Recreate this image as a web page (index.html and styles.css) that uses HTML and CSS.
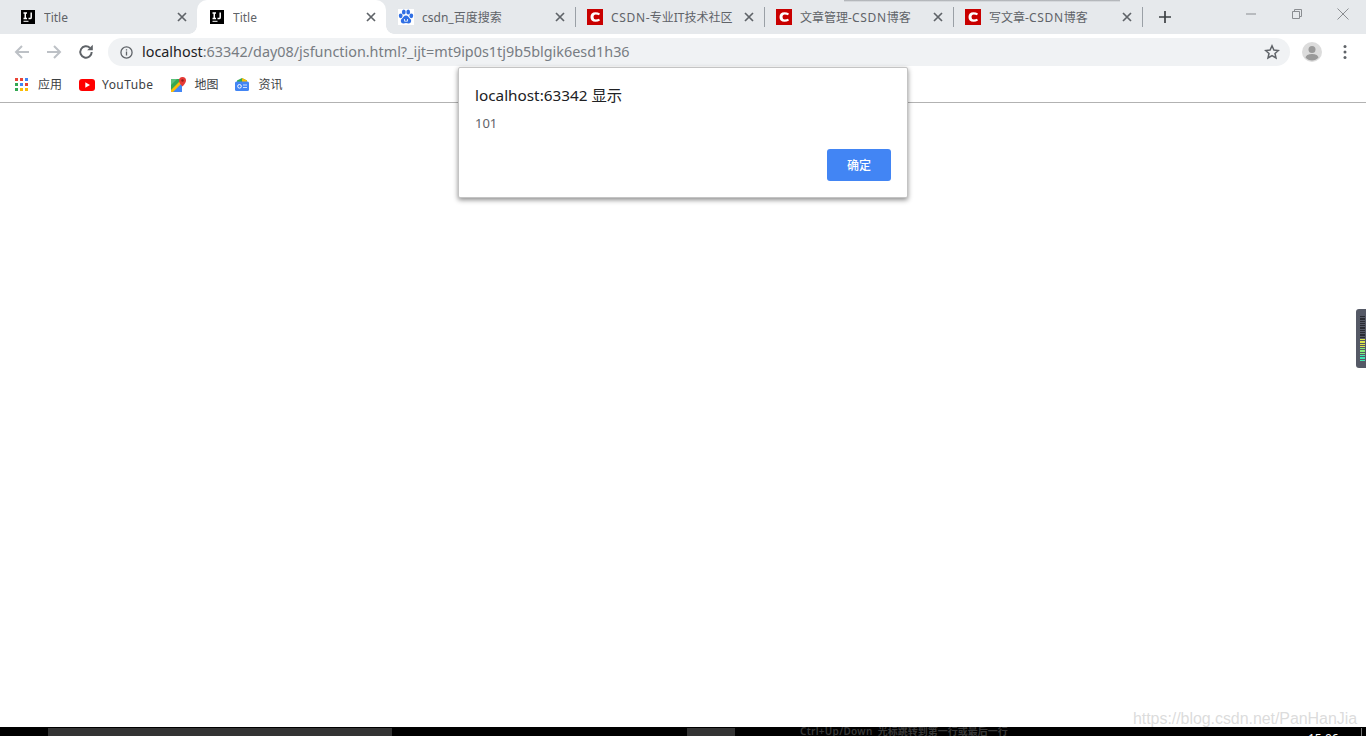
FILE: index.html
```html
<!DOCTYPE html>
<html lang="zh-CN">
<head>
<meta charset="utf-8">
<title>Title</title>
<link rel="stylesheet" href="styles.css">
</head>
<body>
<div class="browser">
  <div class="tabstrip">
    <div class="tab">
      <svg class="fav" viewBox="0 0 14 14"><rect width="14" height="14" fill="#000"/><path class="ij" d="M2.500 3h3.500M4.250 3v5.500M2.500 8.500h3.500M10.200 2.500v4.900q0 1.100-1.100 1.100H7.500"/><rect x="2.500" y="10.800" width="5" height="1" fill="#fff"/></svg>
      <span class="tab-title">Title</span>
      <svg class="close" viewBox="0 0 10 10"><path d="M1 1l8 8M9 1l-8 8"/></svg>
    </div>
    <div class="tab active">
      <svg class="fav" viewBox="0 0 14 14"><rect width="14" height="14" fill="#000"/><path class="ij" d="M2.500 3h3.500M4.250 3v5.500M2.500 8.500h3.500M10.200 2.500v4.900q0 1.100-1.100 1.100H7.500"/><rect x="2.500" y="10.800" width="5" height="1" fill="#fff"/></svg>
      <span class="tab-title">Title</span>
      <svg class="close" viewBox="0 0 10 10"><path d="M1 1l8 8M9 1l-8 8"/></svg>
    </div>
    <div class="tab after-active sep">
      <svg class="fav" viewBox="0 0 16 16"><rect width="16" height="16" fill="#fff"/><g fill="#2f6fe4"><ellipse cx="2.700" cy="6.800" rx="1.900" ry="2.400"/><ellipse cx="5.800" cy="2.900" rx="1.900" ry="2.500"/><ellipse cx="10.200" cy="2.900" rx="1.900" ry="2.500"/><ellipse cx="13.300" cy="6.800" rx="1.900" ry="2.400"/><path d="M8 6.500c-2.200 0-2.800 2.200-4.400 3.500-1.500 1.400-.7 4.500 1.700 4.500 1.100 0 1.900-.4 2.700-.4s1.600.4 2.700.4c2.400 0 3.200-3.100 1.700-4.500C10.800 8.700 10.200 6.500 8 6.500z"/></g><path d="M6.500 10v2.200h3V10" fill="none" stroke="#fff" stroke-width=".8"/></svg>
      <span class="tab-title">csdn_百度搜索</span>
      <svg class="close" viewBox="0 0 10 10"><path d="M1 1l8 8M9 1l-8 8"/></svg>
    </div>
    <div class="tab sep">
      <svg class="fav" viewBox="0 0 16 16"><rect width="16" height="16" fill="#c90000"/><path d="M13 4.500Q11 3.200 8.500 3.200 3.500 3.200 3.500 8t5 4.800q2.500 0 4.500-1.300l-1-1.700q-1.500.8-3.200.8-2.300 0-2.300-2.600t2.300-2.600q1.700 0 3.200.8z" fill="#fff"/></svg>
      <span class="tab-title"><span class="wide">CSDN</span>-专业IT技术社区</span>
      <svg class="close" viewBox="0 0 10 10"><path d="M1 1l8 8M9 1l-8 8"/></svg>
    </div>
    <div class="tab sep">
      <svg class="fav" viewBox="0 0 16 16"><rect width="16" height="16" fill="#c90000"/><path d="M13 4.500Q11 3.200 8.500 3.200 3.500 3.200 3.500 8t5 4.800q2.500 0 4.500-1.300l-1-1.700q-1.500.8-3.200.8-2.300 0-2.300-2.600t2.300-2.600q1.700 0 3.200.8z" fill="#fff"/></svg>
      <span class="tab-title">文章管理-<span class="wide">CSDN</span>博客</span>
      <svg class="close" viewBox="0 0 10 10"><path d="M1 1l8 8M9 1l-8 8"/></svg>
    </div>
    <div class="tab sep">
      <svg class="fav" viewBox="0 0 16 16"><rect width="16" height="16" fill="#c90000"/><path d="M13 4.500Q11 3.200 8.500 3.200 3.500 3.200 3.500 8t5 4.800q2.500 0 4.500-1.300l-1-1.700q-1.500.8-3.200.8-2.300 0-2.300-2.600t2.300-2.600q1.700 0 3.200.8z" fill="#fff"/></svg>
      <span class="tab-title">写文章-<span class="wide">CSDN</span>博客</span>
      <svg class="close" viewBox="0 0 10 10"><path d="M1 1l8 8M9 1l-8 8"/></svg>
    </div>
    <svg class="newtab" viewBox="0 0 12 12"><path d="M6 0v12M0 6h12"/></svg>
    <div class="winctl">
      <svg viewBox="0 0 12 12"><path d="M1 6h10"/></svg>
      <svg viewBox="0 0 12 12"><path d="M1.500 3.500h7v7h-7zM3.500 3.500v-2h7v7h-2"/></svg>
      <svg viewBox="0 0 12 12"><path d="M.5.500l11 11M11.500.500l-11 11"/></svg>
    </div>
  </div>

  <div class="toolbar">
    <svg class="navbtn" viewBox="0 0 16 16"><path class="off" d="M15 8H2M8 2L2 8l6 6"/></svg>
    <svg class="navbtn" viewBox="0 0 16 16"><path class="off" d="M1 8h13M8 2l6 6-6 6"/></svg>
    <svg class="navbtn" viewBox="0 0 16 16"><path class="on" d="M13.700 8A5.700 5.700 0 1 1 12 3.900"/><path d="M9.200 6.300h5.600V.700z" fill="#5f6368"/></svg>
    <div class="omnibox">
      <svg class="info" viewBox="0 0 14 14"><circle cx="7" cy="7" r="6" fill="none" stroke="#5f6368" stroke-width="1.400"/><path d="M6.300 6h1.400v4.300H6.300zM6.300 3.500h1.400v1.400H6.300z" fill="#5f6368"/></svg>
      <span class="url"><span class="host">localhost</span>:63342/day08/jsfunction.html?_ijt=mt9ip0s1tj9b5blgik6esd1h36</span>
      <svg class="star" viewBox="0 0 16 16"><path d="M8 1.800l1.900 4.200 4.500.5-3.400 3 1 4.500L8 11.700 4 14l1-4.500-3.400-3 4.500-.5z"/></svg>
    </div>
    <svg class="avatar" viewBox="0 0 20 20"><circle cx="10" cy="10" r="10" fill="#dcdcdc"/><circle cx="10" cy="7.500" r="3.500" fill="#9a9a9a"/><path d="M3.500 15.500c1-3 4-3.500 6.500-3.500s5.500.5 6.500 3.500c-1.500 2-4 3-6.500 3s-5-1-6.500-3z" fill="#9a9a9a"/></svg>
    <svg class="menu" viewBox="0 0 4 16"><circle cx="2" cy="2.500" r="1.500"/><circle cx="2" cy="8" r="1.500"/><circle cx="2" cy="13.500" r="1.500"/></svg>
  </div>

  <div class="bookmarks">
    <div class="bm bm-apps">
      <svg viewBox="0 0 13 13"><g>
        <rect x="0" y="0" width="3" height="3" fill="#ea4335"/><rect x="5" y="0" width="3" height="3" fill="#ea4335"/><rect x="10" y="0" width="3" height="3" fill="#4285f4"/>
        <rect x="0" y="5" width="3" height="3" fill="#34a853"/><rect x="5" y="5" width="3" height="3" fill="#4285f4"/><rect x="10" y="5" width="3" height="3" fill="#ea4335"/>
        <rect x="0" y="10" width="3" height="3" fill="#34a853"/><rect x="5" y="10" width="3" height="3" fill="#fbbc05"/><rect x="10" y="10" width="3" height="3" fill="#fbbc05"/>
      </g></svg>
      <span>应用</span>
    </div>
    <div class="bm bm-yt">
      <svg viewBox="0 0 16 12"><rect width="16" height="12" rx="3" fill="#f00"/><path d="M6.300 3.300v5.400L11 6z" fill="#fff"/></svg>
      <span class="yt-label">YouTube</span>
    </div>
    <div class="bm bm-map">
      <svg viewBox="0 0 16 16"><path d="M0 2h11v13H0z" fill="#34a853"/><path d="M0 15L11 4v11z" fill="#4285f4"/><path d="M0 13l9-9 2 2L2 15H0z" fill="#fbbc05"/><path d="M0 2h6L0 8z" fill="#5cc17c"/><path d="M11.500 0a3.500 3.500 0 0 0-3.500 3.500C8 6 11.500 9.500 11.500 9.500S15 6 15 3.500A3.500 3.500 0 0 0 11.500 0z" fill="#e53935"/><circle cx="11.500" cy="3.500" r="1.200" fill="#8e1f1b"/></svg>
      <span>地图</span>
    </div>
    <div class="bm bm-news">
      <svg viewBox="0 0 14 13"><path d="M2 2.500L7 0l5 2.500V5H2z" fill="#34a853"/><path d="M7 0l5 2.500V5H7z" fill="#fbbc05"/><rect x="0" y="3.500" width="14" height="9.500" rx="1.500" fill="#4285f4"/><circle cx="4.500" cy="8.300" r="1.800" fill="none" stroke="#fff" stroke-width="1"/><path d="M8 7h4M8 9.500h4" stroke="#cfe0fc" stroke-width="1"/></svg>
      <span>资讯</span>
    </div>
  </div>

  <main class="page"></main>

  <div class="taskbar">
    <div class="task-clip task-a"></div>
    <div class="task-clip task-b"></div>
    <span class="task-hint"><span class="hint-key">Ctrl+Up/Down</span>&nbsp; 光标跳转到第一行或最后一行</span>
    <span class="task-time">15:06</span>
    <div class="task-line"></div>
  </div>
</div>

<div class="edge-shadow"></div>

<div class="dialog">
  <div class="dialog-title">localhost:63342 显示</div>
  <div class="dialog-msg">101</div>
  <div class="dialog-actions"><button class="dialog-ok">确定</button></div>
</div>

<div class="meter">
  <i></i><i></i><i></i><i></i><i></i><i></i><i></i><i></i><i></i><i></i>
  <i class="y"></i><i class="y"></i><i class="y"></i><i class="y"></i><i class="g"></i><i class="g"></i><i class="g"></i><i class="c"></i><i class="c"></i><i class="c"></i>
</div>

<div class="watermark">https://blog.csdn.net/PanHanJia</div>
</body>
</html>
```
FILE: styles.css
```css
* { box-sizing: border-box; }
html, body { margin: 0; height: 100%; overflow: hidden; background: #fff; }
body { font-family: "Noto Sans", "Noto Sans CJK SC", sans-serif; color: #3c4043; }

.browser { display: flex; flex-direction: column; height: 736px; }

/* tab strip */
.tabstrip { display: flex; align-items: stretch; height: 34px; padding-left: 8px; background: #e6e9ec; flex: none; }
.tab { position: relative; width: 189px; display: flex; align-items: center; padding: 0 10px 0 13px; flex: none; }
.tab:first-child { border-bottom-right-radius: 8px; }
.tab.active { background: #fff; border-radius: 10px 10px 0 0; }
.tab.active::before, .tab.active::after { content: ""; position: absolute; bottom: 0; width: 8px; height: 8px; }
.tab.active::before { left: -8px; background: radial-gradient(circle at 0 0, #e6e9ec 7.500px, #fff 8px); }
.tab.active::after { right: -8px; background: radial-gradient(circle at 100% 0, #e6e9ec 7.500px, #fff 8px); }
.tab.sep::after { content: ""; position: absolute; right: -1px; top: 7px; height: 20px; width: 1px; background: #9aa0a6; }
.fav { width: 14px; height: 14px; flex: none; }
.ij { fill: none; stroke: #fff; stroke-width: 1.500; }
.after-active, .sep { padding-left: 12px; }
.sep .fav { width: 16px; height: 16px; }
.tab-title { margin-left: 9px; padding-top: 2px; flex: 1; font-size: 12px; white-space: nowrap; overflow: hidden; color: #5f6368; line-height: 16px; }
.sep .tab-title { margin-left: 8px; }
.wide { letter-spacing: .7px; }
.close { width: 10px; height: 10px; flex: none; fill: none; stroke: #5f6368; stroke-width: 1.700; }
.newtab { width: 12px; height: 12px; margin: 11px 0 0 17px; flex: none; fill: none; stroke: #3c4043; stroke-width: 1.700; }
.winctl { margin-left: auto; display: flex; gap: 34px; padding: 8px 17px 0 0; height: 20px; }
.winctl svg { width: 12px; height: 12px; fill: none; stroke: #8a8d91; stroke-width: 1; }

/* sliver of a window behind the browser, above the tabs */
.edge-shadow { position: absolute; left: 844px; top: 0; width: 276px; height: 2px; background: linear-gradient(#a4a7ab, #e6e9ec); }

/* toolbar */
.toolbar { display: flex; align-items: center; height: 34px; padding: 2px 19px 0 14px; background: #fff; flex: none; }
.navbtn { width: 16px; height: 16px; margin-right: 16px; flex: none; fill: none; stroke-width: 2; }
.off { stroke: #bdc1c6; }
.on { stroke: #5f6368; }
.omnibox { height: 28px; flex: 1; min-width: 0; margin-left: -2px; display: flex; align-items: center; background: #f0f2f4; border-radius: 14px; padding: 0 10px 0 12px; }
.info { width: 13px; height: 13px; flex: none; }
.url { margin-left: 9px; flex: 1; font-size: 14.380px; color: #777c82; white-space: nowrap; line-height: 20px; }
.host { color: #202124; }
.star { width: 16px; height: 16px; flex: none; fill: none; stroke: #5f6368; stroke-width: 1.500; }
.avatar { width: 20px; height: 20px; margin-left: 12px; flex: none; }
.menu { width: 4px; height: 16px; margin-left: 21px; flex: none; fill: #5f6368; }

/* bookmarks */
.bookmarks { display: flex; align-items: center; height: 35px; padding: 0 0 1px 15px; border-bottom: 1px solid #b2b2b2; background: #fff; flex: none; }
.bm { display: flex; align-items: center; font-size: 12px; color: #3c4043; line-height: 16px; white-space: nowrap; }
.yt-label { letter-spacing: .42px; }
.bm-apps svg { width: 13px; height: 13px; margin-right: 10px; }
.bm-yt { margin-left: 17px; }
.bm-yt svg { width: 16px; height: 12px; margin-right: 7px; }
.bm-map { margin-left: 18px; }
.bm-map svg { width: 16px; height: 16px; margin-right: 7px; }
.bm-news { margin-left: 17px; }
.bm-news svg { width: 14px; height: 13px; margin-right: 9px; }

.page { flex: 1; background: #fff; }

/* clipped windows taskbar */
.taskbar { position: relative; height: 9px; flex: none; background: #000; overflow: hidden; }
.task-clip { position: absolute; top: 1px; bottom: 0; background: #333; }
.task-a { left: 48px; width: 344px; }
.task-b { left: 687px; width: 48px; }
.task-hint { position: absolute; left: 800px; top: -3px; font-size: 10px; line-height: 14px; font-weight: 600; color: #383838; white-space: nowrap; }
.hint-key { letter-spacing: .3px; }
.task-time { position: absolute; left: 1308px; top: 4px; font-size: 12px; line-height: 16px; color: #fff; }
.task-line { position: absolute; left: 1361px; top: 1px; bottom: 0; width: 1px; background: #777; }

/* alert dialog */
.dialog { position: absolute; left: 458px; top: 67px; width: 450px; height: 131px; padding: 16px 16px; background: #fff; border: 1px solid #c4c4c4; border-radius: 2px; box-shadow: 0 2px 5px rgba(0, 0, 0, .45); }
.dialog-title { font-size: 15.300px; line-height: 22px; color: #202124; }
.dialog-msg { margin-top: 8px; font-size: 13px; line-height: 18px; color: #5f6368; }
.dialog-actions { display: flex; justify-content: flex-end; margin-top: 17px; }
.dialog-ok { width: 64px; height: 32px; padding: 0; border: 0; border-radius: 3px; background: #4285f4; color: #fff; font: 500 12px "Noto Sans", "Noto Sans CJK SC", sans-serif; }

/* side volume meter */
.meter { position: absolute; right: 0; top: 309px; width: 10px; height: 59px; padding: 7px 0 0 4px; background: #555966; border-radius: 3px 0 0 3px; display: flex; flex-direction: column; gap: 1px; }
.meter i { display: block; width: 5px; height: 1.300px; background: #2a2c33; flex: none; }
.meter .y { background: #dbe44c; }
.meter .g { background: #84ee78; }
.meter .c { background: #3fe6b0; }

/* image watermark */
.watermark { position: absolute; left: 1133px; top: 709px; font: 16px/20px "Liberation Sans", sans-serif; color: rgba(190, 190, 190, .55); white-space: nowrap; letter-spacing: -.06px; }
```
